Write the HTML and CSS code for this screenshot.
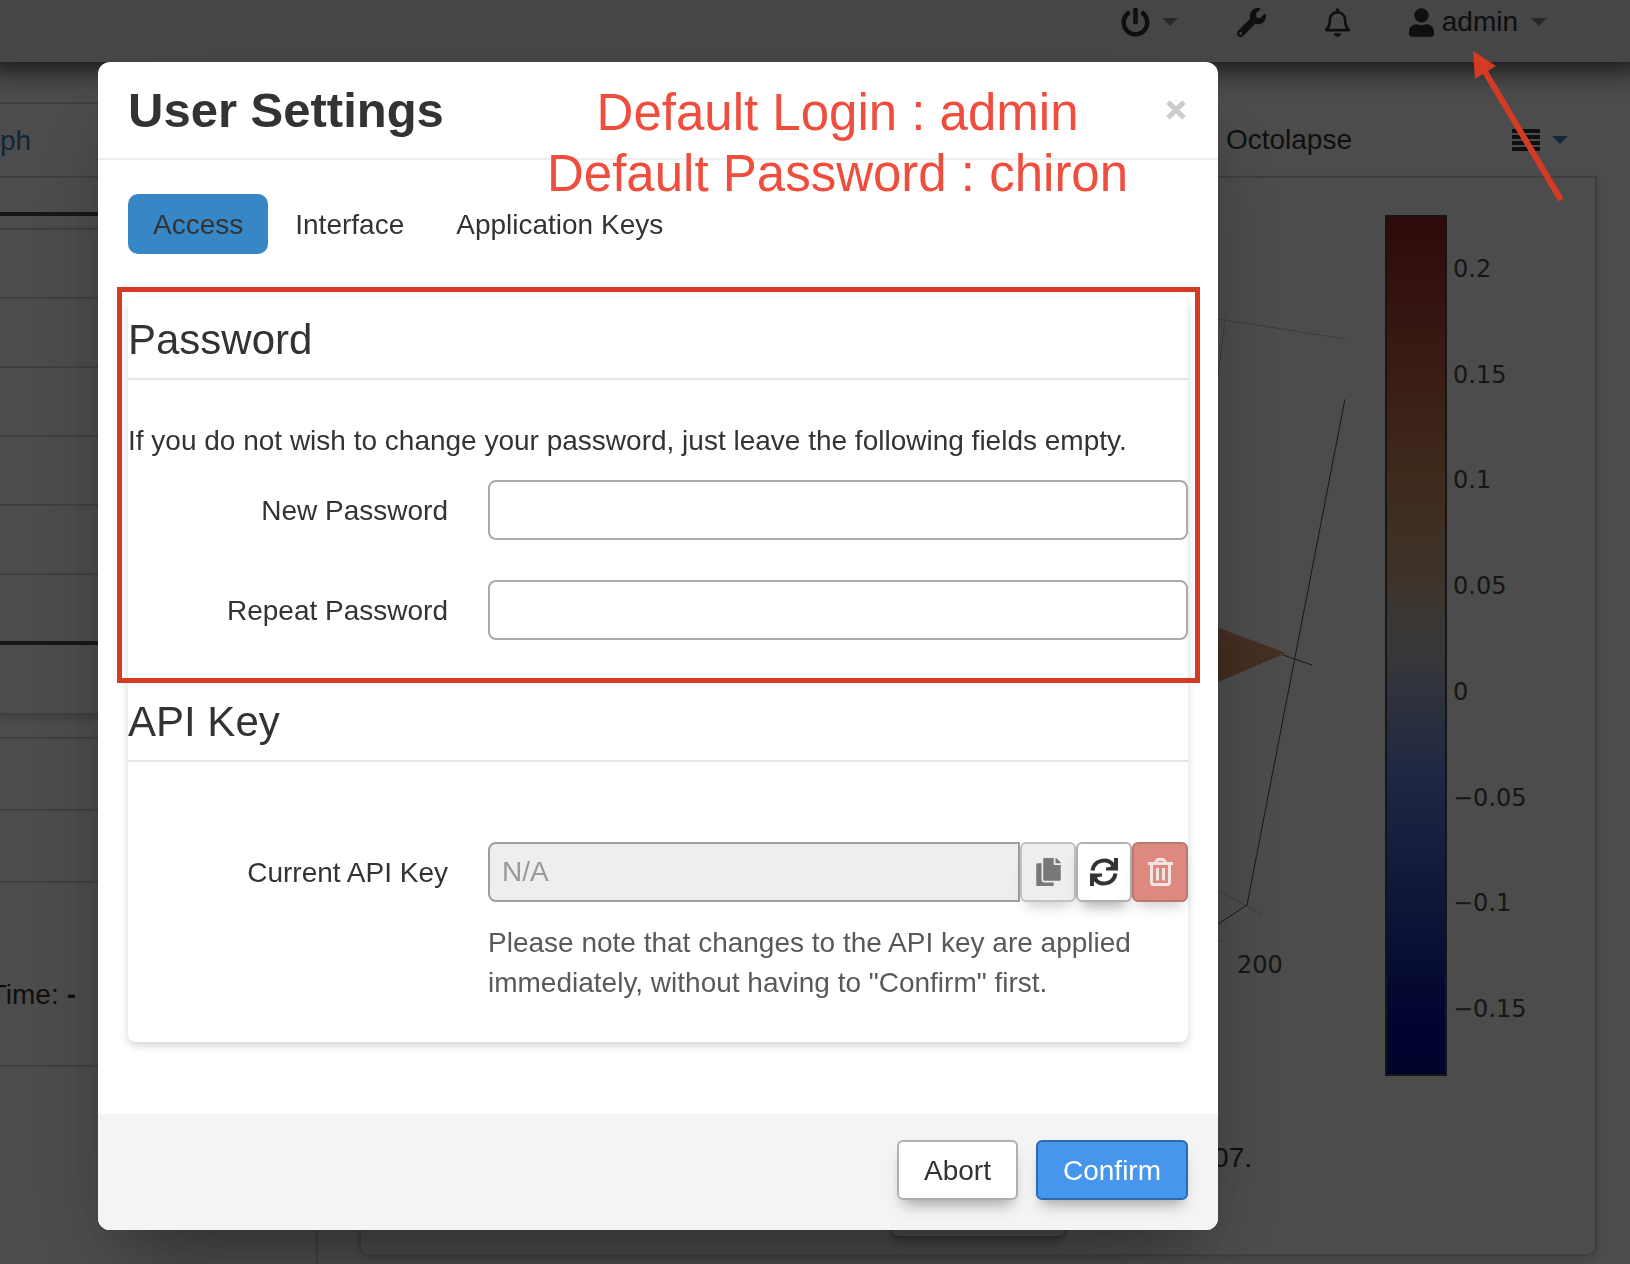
FILE: index.html
```html
<!DOCTYPE html>
<html lang="en">
<head>
  <meta charset="UTF-8">
  <meta name="viewport" content="width=device-width, initial-scale=1.0">
  <title>User Settings</title>
  <link rel="stylesheet" href="styles.css">
</head>
<body>
  <nav class="navbar">
    <a href="#" class="nav-item" aria-label="System">
      <svg class="icon" viewBox="0 0 512 512"><path d="M400 54.1c63 45 104 118.6 104 201.9 0 136.8-110.8 247.7-247.5 248C120 504.3 8.2 393 8 256.4 7.9 173.1 48.9 99.3 111.8 54.2c11.7-8.3 28-4.8 35 7.7L162.6 90c5.9 10.5 3.1 23.8-6.6 31-41.5 30.8-68 79.6-68 134.9-.1 92.3 74.5 168.1 168 168.1 91.6 0 168.6-74.2 168-169.1-.3-51.8-24.7-101.8-68.1-134-9.7-7.2-12.4-20.5-6.5-30.9l15.8-28.1c7-12.4 23.2-16.1 34.8-7.8zM296 264V24c0-13.3-10.7-24-24-24h-32c-13.3 0-24 10.7-24 24v240c0 13.3 10.7 24 24 24h32c13.3 0 24-10.7 24-24z"/></svg>
      <span class="caret"></span>
    </a>
    <a href="#" class="nav-item" aria-label="Settings">
      <svg class="icon" viewBox="0 0 512 512"><path d="M507.73 109.1c-2.24-9.03-13.54-12.09-20.12-5.51l-74.36 74.36-67.88-11.31-11.31-67.88 74.36-74.36c6.62-6.62 3.43-17.9-5.66-20.16-47.38-11.74-99.55.91-136.58 37.93-39.64 39.64-50.55 97.1-34.05 147.2L18.74 402.76c-24.99 24.99-24.99 65.51 0 90.5 24.99 24.99 65.51 24.99 90.5 0l213.21-213.21c50.12 16.71 107.47 5.68 147.37-34.22 37.07-37.07 49.7-89.32 37.91-136.73zM64 472c-13.25 0-24-10.75-24-24 0-13.26 10.75-24 24-24s24 10.74 24 24c0 13.25-10.75 24-24 24z"/></svg>
    </a>
    <a href="#" class="nav-item" aria-label="Notifications">
      <svg class="icon icon-narrow" viewBox="0 0 448 512"><path d="M439.39 362.29c-19.32-20.76-55.47-51.99-55.47-154.29 0-77.7-54.48-139.9-127.94-155.16V32c0-17.67-14.32-32-31.98-32s-31.98 14.33-31.98 32v20.84C118.56 68.1 64.08 130.3 64.08 208c0 102.3-36.15 133.53-55.47 154.29-6 6.45-8.66 14.16-8.61 21.71.11 16.4 12.98 32 32.1 32h383.8c19.12 0 32-15.6 32.1-32 .05-7.55-2.61-15.27-8.61-21.71zM67.53 368c21.22-27.97 44.42-74.33 44.53-159.42 0-.2-.06-.38-.06-.58 0-61.86 50.14-112 112-112s112 50.14 112 112c0 .2-.06.38-.06.58.11 85.1 23.31 131.46 44.53 159.42H67.53zM224 512c35.32 0 63.97-28.65 63.97-64H160.03c0 35.35 28.65 64 63.97 64z"/></svg>
    </a>
    <a href="#" class="nav-item nav-user">
      <svg class="icon icon-narrow" viewBox="0 0 448 512"><path d="M224 256c70.7 0 128-57.3 128-128S294.7 0 224 0 96 57.3 96 128s57.3 128 128 128zm89.6 32h-16.7c-22.2 10.2-46.9 16-72.9 16s-50.6-5.8-72.9-16h-16.7C60.2 288 0 348.2 0 422.4V464c0 26.5 21.5 48 48 48h352c26.5 0 48-21.5 48-48v-41.6c0-74.2-60.2-134.4-134.4-134.4z"/></svg>
      admin
      <span class="caret"></span>
    </a>
  </nav>

  <div class="page">
    <aside class="sidebar">
      <div class="side-tab"><a href="#">ph</a></div>
      <div class="side-strip"></div>
      <div class="side-rows">
        <div class="side-row"></div>
        <div class="side-row"></div>
        <div class="side-row"></div>
        <div class="side-row"></div>
        <div class="side-row"></div>
        <div class="side-row side-row-last"></div>
        <div class="side-row side-foot"></div>
      </div>
      <div class="side-state">
        <div class="side-row"></div>
        <div class="side-row"></div>
        <div class="side-time">Time: <b>-</b></div>
      </div>
    </aside>

    <main class="content">
      <div class="content-tabs">
        <a href="#" class="content-tab">Octolapse</a>
        <a href="#" class="content-menu" aria-label="More tabs">
          <svg width="28" height="22" viewBox="0 0 28 22"><path d="M0 0h28v4H0zM0 6h28v4H0zM0 12h28v4H0zM0 18h28v4H0z"/></svg>
          <span class="caret caret-blue"></span>
        </a>
      </div>
      <div class="panel">
        <div class="plot">
          <svg class="scene" width="145" height="861" viewBox="1200 215 145 861">
            <defs>
              <linearGradient id="mesh" x1="0" x2="1" y1="1" y2="0">
                <stop offset="0" stop-color="#d08a5c"/>
                <stop offset="1" stop-color="#f2ae84"/>
              </linearGradient>
            </defs>
            <path class="grid-line" d="M1200 316L1345 339M1225 320L1218 375L1204 480M1200 880L1261 914M1200 932L1223 942"/>
            <path class="axis-line" d="M1345 399L1247 905L1200 936M1283 655L1312 665"/>
            <path fill="url(#mesh)" d="M1200 621L1286 653L1200 690z"/>
            <text x="1237" y="973">200</text>
          </svg>
          <div class="colorbar"></div>
          <div class="ticks">
            <span>0.2</span>
            <span>0.15</span>
            <span>0.1</span>
            <span>0.05</span>
            <span>0</span>
            <span>−0.05</span>
            <span>−0.1</span>
            <span>−0.15</span>
          </div>
        </div>
        <p class="summary">07.</p>
        <div class="panel-action"></div>
      </div>
    </main>
  </div>

  <div class="backdrop">
    <div class="modal" role="dialog" aria-labelledby="modalTitle">
      <div class="modal-header">
        <h1 id="modalTitle">User Settings</h1>
        <button type="button" class="close" aria-label="Close">
          <svg width="20" height="20" viewBox="0 0 20 20"><path d="M2 2l16 16M18 2L2 18"/></svg>
        </button>
      </div>

      <div class="modal-body">
        <div class="tabs">
          <a href="#access" class="tab active">Access</a>
          <a href="#interface" class="tab">Interface</a>
          <a href="#keys" class="tab">Application Keys</a>
        </div>

        <form class="well" id="access">
          <section class="password">
            <h2>Password</h2>
            <p class="intro">If you do not wish to change your password, just leave the following fields empty.</p>
            <div class="row">
              <label for="newPassword">New Password</label>
              <input type="password" id="newPassword">
            </div>
            <div class="row">
              <label for="repeatPassword">Repeat Password</label>
              <input type="password" id="repeatPassword">
            </div>
          </section>

          <section class="api">
            <h2>API Key</h2>
            <div class="row">
              <label for="apiKey">Current API Key</label>
              <div class="input-group">
                <input type="text" id="apiKey" placeholder="N/A" disabled>
                <button type="button" class="btn btn-icon" aria-label="Copy" disabled>
                  <svg width="25" height="28" viewBox="0 0 448 512"><path fill="currentColor" d="M320 448v40c0 13.255-10.745 24-24 24H24c-13.255 0-24-10.745-24-24V120c0-13.255 10.745-24 24-24h72v296c0 30.879 25.121 56 56 56h168zm0-344V0H152c-13.255 0-24 10.745-24 24v368c0 13.255 10.745 24 24 24h272c13.255 0 24-10.745 24-24V128H344c-13.2 0-24-10.8-24-24zm120.971-31.029L375.029 7.029A24 24 0 0 0 358.059 0H352v96h96v-6.059a24 24 0 0 0-7.029-16.97z"/></svg>
                </button>
                <button type="button" class="btn btn-icon" aria-label="Generate">
                  <svg width="28" height="28" viewBox="0 0 28 28">
                    <path fill="none" stroke="currentColor" stroke-width="4" d="M2.500 12.500A11.600 11.600 0 0 1 23.500 7.500M25.500 15.500A11.600 11.600 0 0 1 4.500 20.500"/>
                    <path fill="currentColor" d="M28 0v12.500H16V9.500l4-.5 4-4V0zM0 28V15.500h12v3l-4 .5-4 4v5z"/>
                  </svg>
                </button>
                <button type="button" class="btn btn-icon btn-danger" aria-label="Delete" disabled>
                  <svg width="25" height="28" viewBox="0 0 25 28" fill="none" stroke="currentColor" stroke-width="3" stroke-linejoin="round">
                    <path d="M0 5.500h25M7 5l2.500-3.500h6L18 5M3.500 6v19a1.500 1.500 0 0 0 1.500 1.500h15a1.500 1.500 0 0 0 1.500-1.500V6M9.500 10v12.500M15.500 10v12.500"/>
                  </svg>
                </button>
              </div>
            </div>
            <p class="help">Please note that changes to the API key are applied immediately, without having to "Confirm" first.</p>
          </section>
        </form>
      </div>

      <div class="modal-footer">
        <button type="button" class="btn">Abort</button>
        <button type="button" class="btn btn-primary">Confirm</button>
      </div>

      <div class="note">Default Login : admin<br>Default Password : chiron</div>
    </div>
  </div>

  <svg class="arrow" width="92" height="154" viewBox="0 0 92 154">
    <path d="M89 149L12 19" fill="none" stroke="#d43b22" stroke-width="6"/>
    <path d="M1 0L24 15L3 28z" fill="#d43b22"/>
  </svg>
</body>
</html>
```
FILE: styles.css
```css
* {
  box-sizing: border-box;
}
body {
  margin: 0;
  height: 100vh;
  overflow: hidden;
  background: #fff;
  color: #333;
  font: 28px/40px "Liberation Sans", Arial, sans-serif;
}
a {
  color: inherit;
  text-decoration: none;
}
h1, h2, p {
  margin: 0;
}

/* navbar */
.navbar {
  position: relative;
  display: flex;
  justify-content: flex-end;
  gap: 59px;
  height: 62px;
  padding: 2px 83px 20px 0;
  background: #e9e9e9;
  box-shadow: 0 -12px 32px 16px rgba(0,0,0,0.9);
}
.nav-item {
  display: flex;
  align-items: center;
  gap: 12px;
}
.nav-user {
  gap: 8px;
}
.nav-user .caret {
  margin-left: 5px;
}
.icon {
  width: 29px;
  height: 29px;
  fill: #333;
}
.icon-narrow {
  width: 25px;
}
.caret {
  border: 8px solid transparent;
  border-top-color: #888;
  border-bottom: 0;
}
.caret-blue {
  border-top-color: #3a84bd;
}

/* page behind the dialog */
.page {
  display: flex;
  height: calc(100vh - 62px);
}
.sidebar {
  flex: none;
  width: 318px;
  padding-top: 40px;
  border-right: 2px solid #d4d4d4;
}
.side-tab {
  height: 76px;
  padding-top: 17px;
  border: solid #d4d4d4;
  border-width: 2px 0;
  color: #3a84bd;
}
.side-strip {
  height: 38px;
  border-bottom: 4px solid #4c4c4c;
}
.side-rows {
  margin-top: 12px;
  border-top: 2px solid #d4d4d4;
  box-shadow: 0 3px 8px rgba(0,0,0,0.2);
}
.side-row {
  height: 69px;
  border-bottom: 2px solid #d4d4d4;
}
.side-row-last {
  height: 70px;
  border-bottom: 4px solid #4c4c4c;
}
.side-foot {
  height: 70px;
}
.side-state {
  margin-top: 22px;
  border: solid #d4d4d4;
  border-width: 2px 0;
}
.side-state .side-row {
  height: 72px;
}
.side-time {
  display: flex;
  justify-content: flex-end;
  gap: 8px;
  width: 76px;
  height: 182px;
  padding-top: 92px;
  overflow: hidden;
}
.content {
  flex: 1;
  padding: 40px 33px 0 41px;
}
.content-tabs {
  display: flex;
  justify-content: flex-end;
  align-items: center;
  gap: 160px;
  height: 74px;
  padding: 2px 29px 0 0;
}
.content-menu {
  display: flex;
  align-items: center;
  gap: 12px;
}
.content-menu svg {
  fill: #333;
}
.panel {
  height: 1080px;
  padding-top: 37px;
  border: 2px solid #d4d4d4;
  border-radius: 0 0 10px 10px;
  box-shadow: 0 3px 8px rgba(0,0,0,0.15);
}
.plot {
  display: flex;
  justify-content: flex-end;
  padding-right: 64px;
}
.scene {
  margin-right: 40px;
  font: 24px "DejaVu Sans", sans-serif;
  fill: #4c4c4c;
}
.grid-line {
  fill: none;
  stroke: #c4c4c4;
  stroke-width: 1;
}
.axis-line {
  fill: none;
  stroke: #4c4c4c;
  stroke-width: 1;
}
.colorbar {
  width: 62px;
  border: 2px solid #4c4c4c;
  background: linear-gradient(to top, #000a90 0%, #000c9c 5%, #6a85e1 35%, #bebebe 50%, #d0a684 60%, #d48c5f 70%, #a01e24 100%);
}
.ticks {
  display: flex;
  flex-direction: column;
  justify-content: space-between;
  width: 78px;
  margin-left: 6px;
  padding: 34px 0 47px;
  font-family: "DejaVu Sans", sans-serif;
  font-size: 24px;
  color: #4c4c4c;
  white-space: nowrap;
}
.summary {
  margin-top: 62px;
  padding-right: 343px;
  text-align: right;
}
.panel-action {
  width: 176px;
  height: 60px;
  margin: 0 auto;
  border: 2px solid #bbb;
  border-radius: 6px;
  box-shadow: 0 8px 12px -4px rgba(0,0,0,0.3);
}

/* dialog */
.backdrop {
  position: fixed;
  inset: 0;
  padding: 62px 98px 0;
  background: rgba(0,0,0,0.7);
}
.modal {
  position: relative;
  max-width: 1120px;
  border-radius: 12px;
  background: #fff;
  box-shadow: 0 50px 100px -20px rgba(0,0,0,0.25), 0 30px 60px -30px rgba(0,0,0,0.3);
}
.modal-header {
  display: flex;
  justify-content: space-between;
  align-items: center;
  padding: 18px 32px 18px 30px;
  border-bottom: 2px solid #eee;
}
h1 {
  font-size: 49px;
  line-height: 60px;
}
.close {
  display: flex;
  padding: 0;
  border: 0;
  background: none;
}
.close path {
  stroke: #ccc;
  stroke-width: 5;
}
.modal-body {
  padding: 34px 30px 72px;
}
.tabs {
  display: flex;
  gap: 2px;
  margin-bottom: 44px;
}
.tab {
  padding: 11px 25px 9px;
  border-radius: 10px;
}
.tab.active {
  background: #3787c7;
}
.well {
  padding-bottom: 39px;
  border-radius: 8px;
  box-shadow: 0 4px 8px rgba(0,0,0,0.16);
}
h2 {
  padding-top: 4px;
  border-bottom: 2px solid #e5e5e5;
  font-size: 42px;
  font-weight: normal;
  line-height: 76px;
}
.password {
  position: relative;
  padding-bottom: 40px;
}
/* highlight frame */
.password::after {
  content: "";
  position: absolute;
  inset: -11px -12px -3px -11px;
  border: 5px solid #d43b22;
  pointer-events: none;
}
.intro {
  margin: 41px 0 19px;
}
.row {
  display: flex;
  align-items: center;
  gap: 40px;
}
.row + .row {
  margin-top: 40px;
}
label {
  flex: none;
  width: 320px;
  padding-top: 2px;
  text-align: right;
}
input {
  flex: 1;
  min-width: 0;
  height: 60px;
  padding: 0 12px;
  border: 2px solid #aaa;
  border-radius: 8px;
  background: #fff;
  font: inherit;
}
.api .row {
  margin-top: 80px;
}
.input-group {
  display: flex;
  flex: 1;
}
.input-group input {
  border-color: #9f9f9f;
  border-radius: 8px 0 0 8px;
  background: #eee;
}
input::placeholder {
  color: #999;
  opacity: 1;
}
.help {
  margin: 21px 0 0 360px;
  color: #595959;
}
.btn {
  height: 60px;
  padding: 1px 24px 0;
  border: 2px solid #b0b0b0;
  border-radius: 6px;
  background: #fff;
  box-shadow: 0 10px 14px -6px rgba(0,0,0,0.35);
  color: #333;
  font: inherit;
}
.btn-icon {
  display: flex;
  align-items: center;
  justify-content: center;
  width: 56px;
  padding: 0;
}
.btn-icon:disabled {
  background: #eee;
  border-color: #c2c2c2;
  box-shadow: 0 10px 14px -6px rgba(0,0,0,0.2);
  color: #787878;
}
.btn-danger:disabled {
  background: #de897f;
  border-color: #b97973;
  color: #f3e4e2;
}
.btn-primary {
  border-color: #2e69ad;
  background: #4596ec;
  color: #fff;
}
.modal-footer {
  display: flex;
  justify-content: flex-end;
  gap: 18px;
  padding: 26px 30px 30px;
  border-radius: 0 0 12px 12px;
  background: #f4f4f4;
}
.modal-footer .btn {
  padding: 1px 25px 0;
}

/* annotations */
.note {
  position: absolute;
  top: 20px;
  left: 449px;
  color: #ef4e3e;
  font-size: 51px;
  line-height: 61px;
  text-align: center;
  white-space: nowrap;
}
.arrow {
  position: absolute;
  top: 51px;
  right: 66px;
}
```
